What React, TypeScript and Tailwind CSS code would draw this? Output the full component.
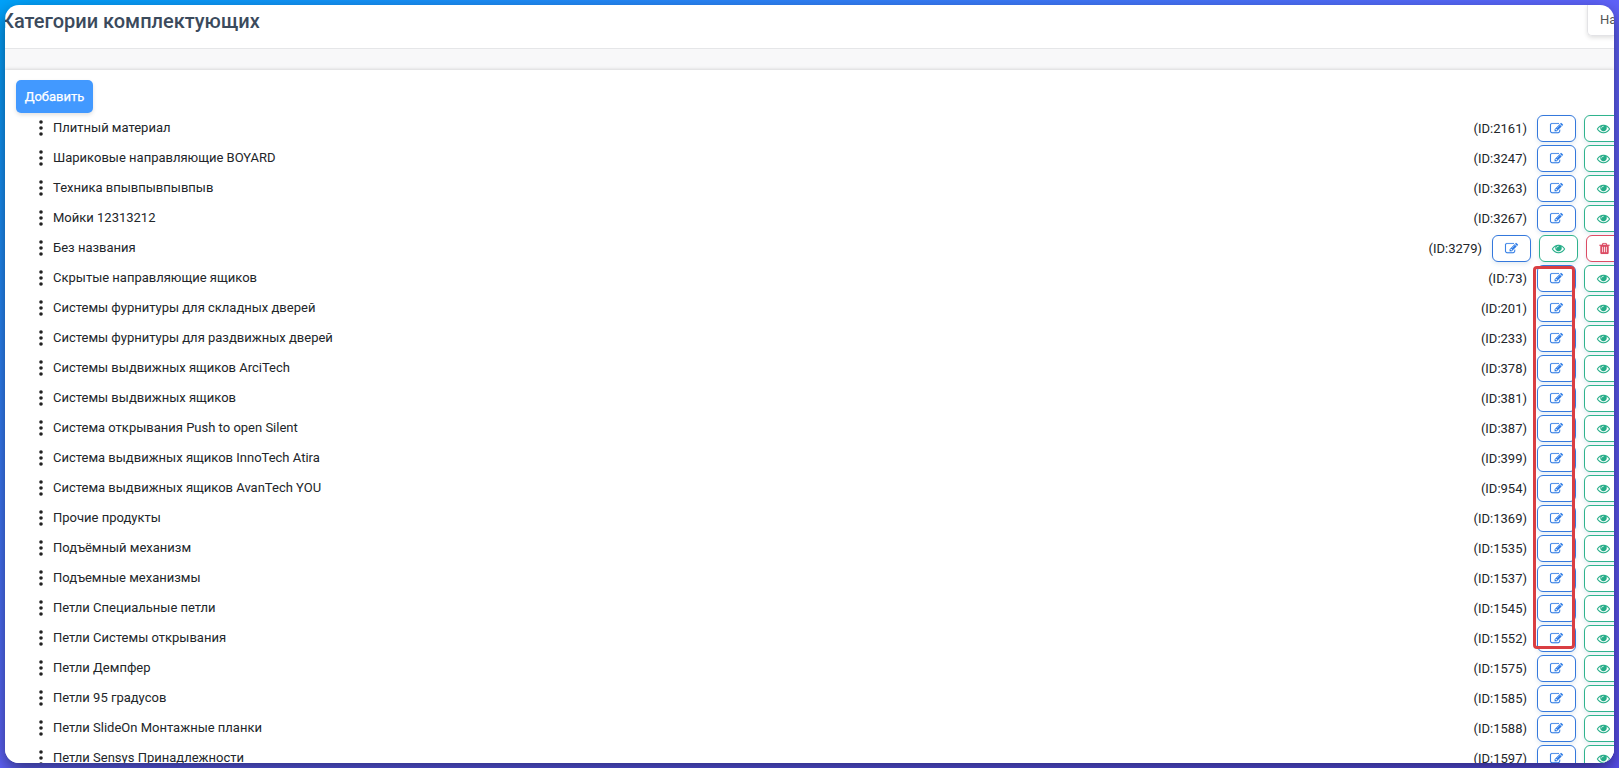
import clsx from "clsx";

interface Category {
  name: string;
  id: number;
  removable?: boolean;
}

const categories: Category[] = [
  { name: "Плитный материал", id: 2161 },
  { name: "Шариковые направляющие BOYARD", id: 3247 },
  { name: "Техника впывпывпывпыв", id: 3263 },
  { name: "Мойки 12313212", id: 3267 },
  { name: "Без названия", id: 3279, removable: true },
  { name: "Скрытые направляющие ящиков", id: 73 },
  { name: "Системы фурнитуры для складных дверей", id: 201 },
  { name: "Системы фурнитуры для раздвижных дверей", id: 233 },
  { name: "Системы выдвижных ящиков ArciTech", id: 378 },
  { name: "Системы выдвижных ящиков", id: 381 },
  { name: "Система открывания Push to open Silent", id: 387 },
  { name: "Система выдвижных ящиков InnoTech Atira", id: 399 },
  { name: "Система выдвижных ящиков AvanTech YOU", id: 954 },
  { name: "Прочие продукты", id: 1369 },
  { name: "Подъёмный механизм", id: 1535 },
  { name: "Подъемные механизмы", id: 1537 },
  { name: "Петли Специальные петли", id: 1545 },
  { name: "Петли Системы открывания", id: 1552 },
  { name: "Петли Демпфер", id: 1575 },
  { name: "Петли 95 градусов", id: 1585 },
  { name: "Петли SlideOn Монтажные планки", id: 1588 },
  { name: "Петли Sensys Принадлежности", id: 1597 },
];

const icons = {
  edit: "M888 1184l116-116-152-152-116 116v56h96v96h56zm440-720q-16-16-33 1l-350 350q-17 17-1 33t33-1l350-350q17-17 1-33zm80 594v190q0 119-84.5 203.5t-203.5 84.5h-832q-119 0-203.5-84.5t-84.5-203.5v-832q0-119 84.5-203.5t203.5-84.5h832q63 0 117 25 15 7 18 23 3 17-9 29l-49 49q-14 14-32 8-23-6-45-6h-832q-66 0-113 47t-47 113v832q0 66 47 113t113 47h832q66 0 113-47t47-113v-126q0-13 9-22l64-64q15-15 35-7t20 29zm-96-738l288 288-672 672h-288v-288zm444 132l-92 92-288-288 92-92q28-28 68-28t68 28l152 152q28 28 28 68t-28 68z",
  eye: "M1664 960q-152-236-381-353 61 104 61 225 0 185-131.5 316.5t-316.5 131.5-316.5-131.5-131.5-316.5q0-121 61-225-229 117-381 353 133 205 333.5 326.5t434.5 121.5 434.5-121.5 333.5-326.5zm-720-384q0-20-14-34t-34-14q-125 0-214.5 89.5t-89.5 214.5q0 20 14 34t34 14 34-14 14-34q0-86 61-147t147-61q20 0 34-14t14-34zm848 384q0 34-20 69-140 230-376.5 368.5t-499.5 138.5-499.5-139-376.5-368q-20-35-20-69t20-69q140-229 376.5-368t499.5-139 499.5 139 376.5 368q20 35 20 69z",
  trash: "M704 1376v-704q0-14-9-23t-23-9h-64q-14 0-23 9t-9 23v704q0 14 9 23t23 9h64q14 0 23-9t9-23zm256 0v-704q0-14-9-23t-23-9h-64q-14 0-23 9t-9 23v704q0 14 9 23t23 9h64q14 0 23-9t9-23zm256 0v-704q0-14-9-23t-23-9h-64q-14 0-23 9t-9 23v704q0 14 9 23t23 9h64q14 0 23-9t9-23zm-544-992h448l-48-117q-7-9-17-11h-317q-10 2-17 11zm928 32v64q0 14-9 23t-23 9h-96v948q0 83-47 143.5t-113 60.5h-832q-66 0-113-58.5t-47-141.5v-952h-96q-14 0-23-9t-9-23v-64q0-14 9-23t23-9h309l70-167q15-37 54-63t79-26h320q40 0 79 26t54 63l70 167h309q14 0 23 9t9 23z",
};

function IconButton({ icon }: { icon: keyof typeof icons }) {
  return (
    <button
      className={clsx(
        "flex h-[27px] shrink-0 items-center justify-center rounded-[6px] border bg-white shadow-[0_2px_4px_rgba(60,110,160,0.14)]",
        icon === "edit" && "w-[39px] border-[#3478dc] text-[#2f7be6]",
        icon === "eye" && "w-[39px] border-[#2fb38d] text-[#25ad88]",
        icon === "trash" && "w-[37px] border-[#dc4c64] text-[#dc4c64]"
      )}
    >
      <svg
        viewBox="0 0 1792 1792"
        className="size-[13px] overflow-visible"
        fill="currentColor"
        stroke="currentColor"
        strokeWidth="16"
      >
        <path d={icons[icon]} />
      </svg>
    </button>
  );
}

function CategoryRow({ item }: { item: Category }) {
  return (
    <li className="flex h-[30px] items-start pl-[33px]">
      <svg viewBox="0 0 6 18" className="mt-[4px] h-[18px] w-[6px]" fill="#222">
        <circle cx="3" cy="3" r="1.8" />
        <circle cx="3" cy="9" r="1.8" />
        <circle cx="3" cy="15" r="1.8" />
      </svg>
      <span className="ml-[9px] grow leading-[26px]">{item.name}</span>
      <span className="leading-[28px]">(ID:{item.id})</span>
      <div
        className={clsx(
          "ml-[10px] flex shrink-0 gap-2",
          item.removable ? "w-[122px]" : "w-[77px]"
        )}
      >
        <IconButton icon="edit" />
        <IconButton icon="eye" />
        {item.removable && <IconButton icon="trash" />}
      </div>
    </li>
  );
}

export default function App() {
  return (
    <div className="h-[768px] w-[1619px] overflow-hidden bg-[linear-gradient(to_bottom_right,#00a2fa_0%,#5f62fa_50%,#5a50f0_100%)] p-[5px] font-['Roboto','Noto_Sans',sans-serif] text-[13px] text-[#212529]">
      <div className="relative flex h-[758px] w-[1609px] flex-col overflow-hidden rounded-[14px] bg-white shadow-[0_7px_18px_rgba(0,0,0,0.5)]">
        <header className="flex h-[44px] shrink-0 items-start justify-between border-b border-[#e5e6e8]">
          <h1 className="-ml-[4px] mt-[2px] text-[20px] leading-[28px] font-medium text-[#3b4a5c]">
            Категории комплектующих
          </h1>
          <button className="h-[31px] w-[27px] shrink-0 overflow-hidden rounded-bl-[5px] border-b border-l border-[#e3e3e6] pl-[12px] text-left leading-[26px] whitespace-nowrap text-[#555] shadow-[0_2px_4px_rgba(0,0,0,0.12)]">
            <span className="-mt-px block h-[26px]">Назад</span>
          </button>
        </header>
        <div className="h-[21px] shrink-0 bg-[#f8f8f9]" />
        <main className="grow bg-white pt-[10px] shadow-[0_0_4px_rgba(0,0,0,0.2)]">
          <button className="ml-[11px] block h-[33px] w-[77px] rounded-[5px] bg-[#4299ff] text-white shadow-[0_2px_4px_rgba(0,0,0,0.12)] [-webkit-text-stroke:0.25px_white]">
            Добавить
          </button>
          <ul className="mt-[2px]">
            {categories.map((item) => (
              <CategoryRow key={item.id} item={item} />
            ))}
          </ul>
        </main>
        {/* highlight over the edit buttons */}
        <div className="pointer-events-none absolute top-[261px] left-[1528px] h-[383px] w-[42px] rounded-[4px] border-3 border-[#d93e42]" />
      </div>
    </div>
  );
}
